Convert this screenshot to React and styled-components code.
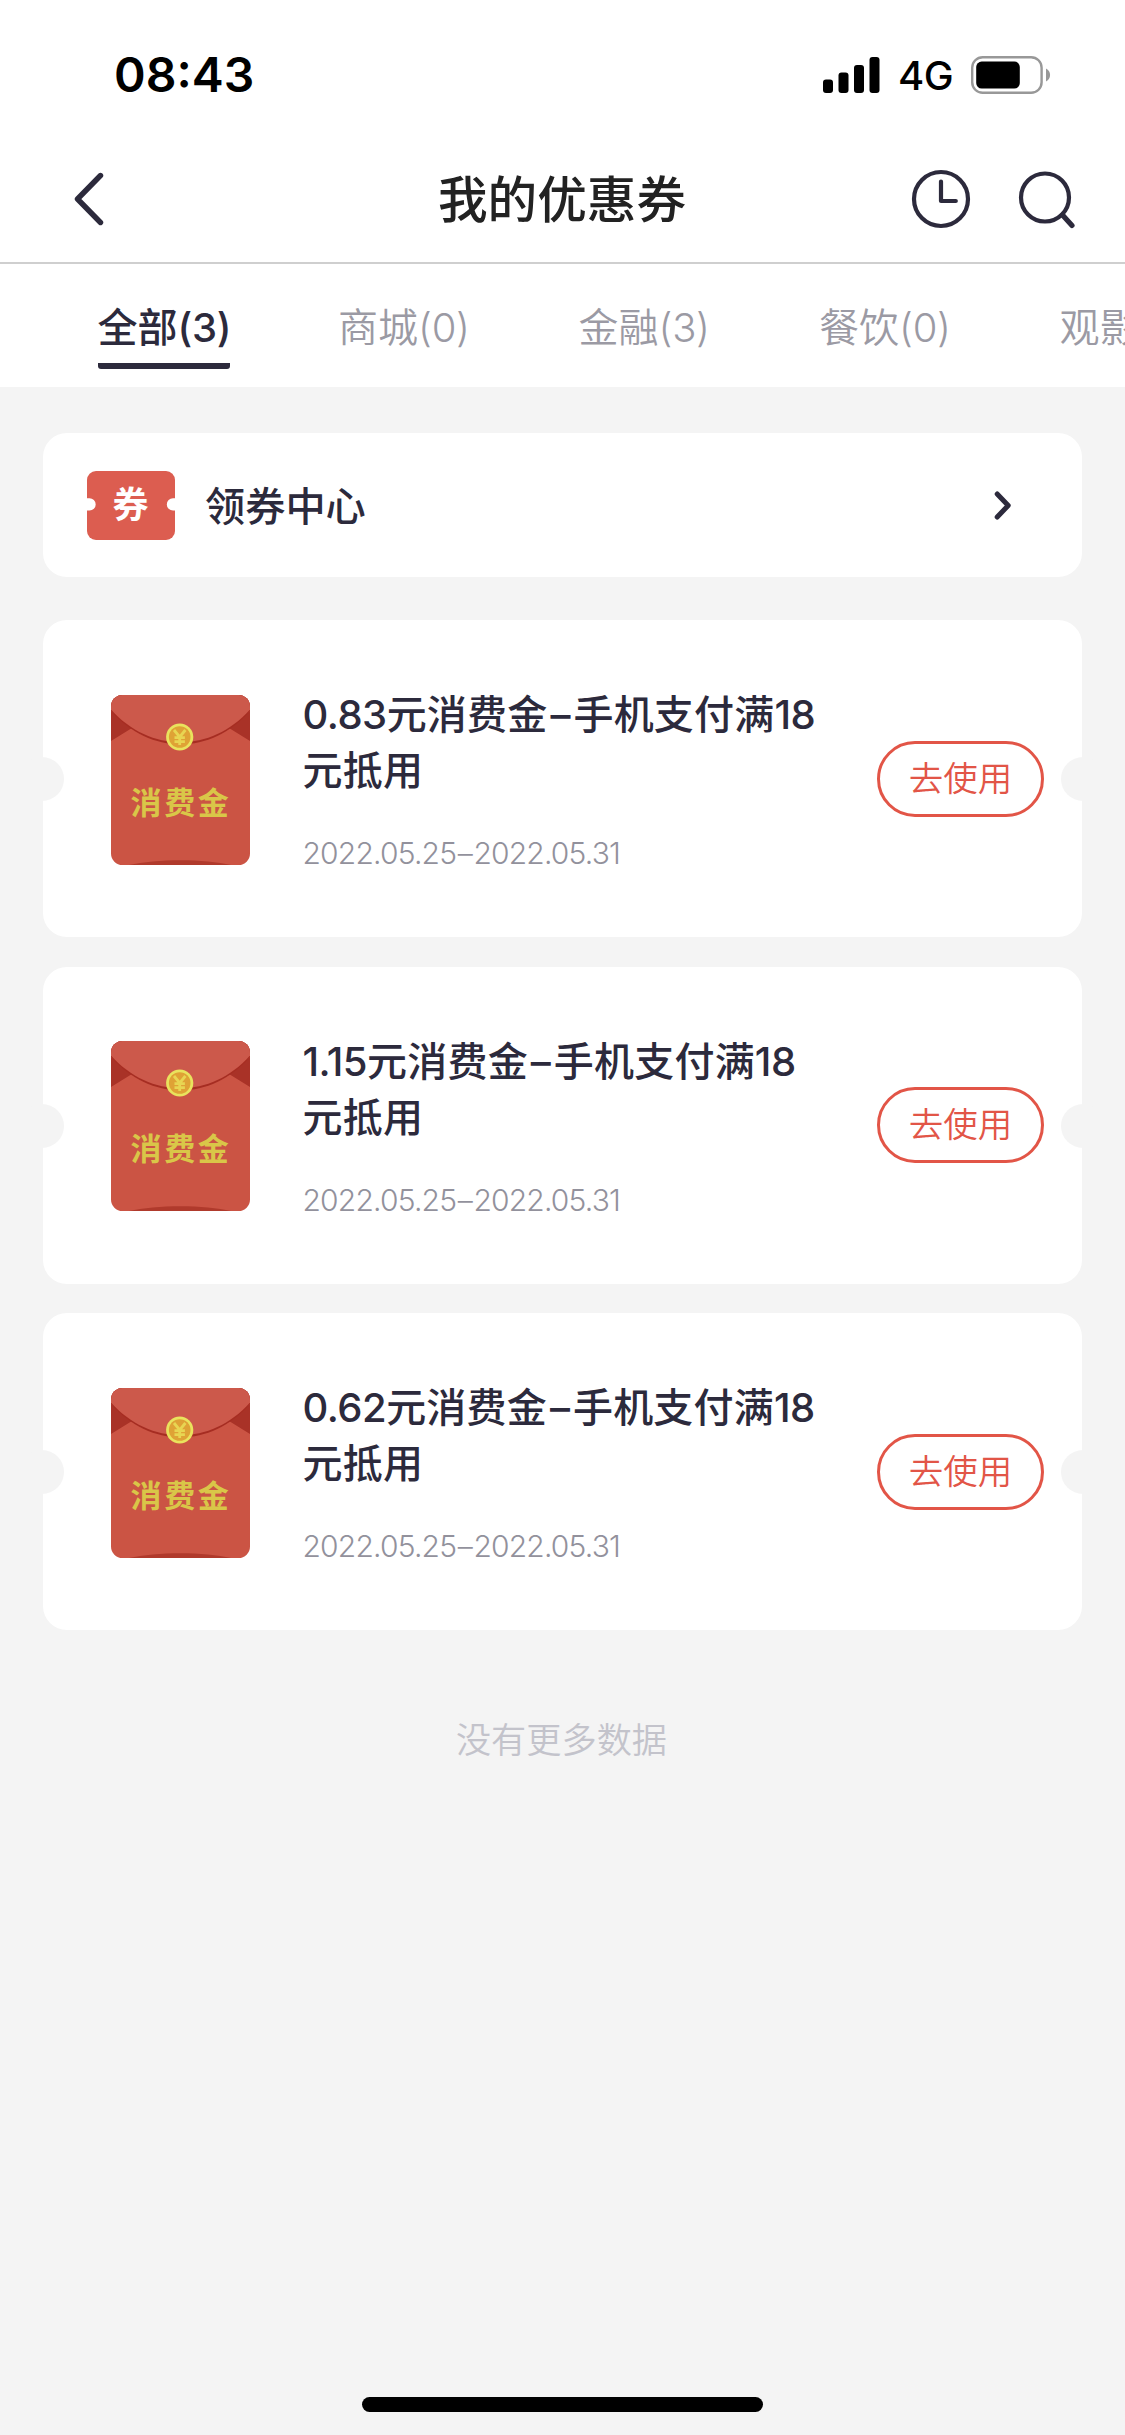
import React, { useState } from "react";
import styled, { createGlobalStyle } from "styled-components";

const tabs = [
  { id: "all", name: "全部", count: 3 },
  { id: "mall", name: "商城", count: 0 },
  { id: "finance", name: "金融", count: 3 },
  { id: "food", name: "餐饮", count: 0 },
  { id: "movie", name: "观影", count: 0 },
];

const coupons = [
  { id: 1, amount: "0.83", limit: 18, start: "2022.05.25", end: "2022.05.31" },
  { id: 2, amount: "1.15", limit: 18, start: "2022.05.25", end: "2022.05.31" },
  { id: 3, amount: "0.62", limit: 18, start: "2022.05.25", end: "2022.05.31" },
];

const SignalIcon = () => (
  <svg width="57" height="36" viewBox="0 0 57 36">
    <rect x="0" y="22.5" width="10" height="13.5" rx="3" />
    <rect x="15.5" y="15.5" width="10" height="20.5" rx="3" />
    <rect x="31" y="8" width="10" height="28" rx="3" />
    <rect x="46.5" y="0" width="10" height="36" rx="3" />
  </svg>
);

const BatteryIcon = () => (
  <svg width="80" height="38" viewBox="0 0 80 38">
    <rect
      x="1.2"
      y="1.2"
      width="69.4"
      height="35.6"
      rx="10.5"
      fill="none"
      stroke="#989898"
      strokeWidth="2.4"
    />
    <rect x="5.2" y="5.6" width="43.6" height="27" rx="5.5" />
    <path d="M75 12.5c5.4 2.6 5.4 10.4 0 13z" fill="#989898" />
  </svg>
);

const BackIcon = () => (
  <svg width="30" height="54" viewBox="0 0 30 54">
    <path
      d="M26.5 3.5L3.5 27l23 23.5"
      fill="none"
      stroke="#2c2a3c"
      strokeWidth="5.4"
      strokeLinecap="round"
      strokeLinejoin="round"
    />
  </svg>
);

const ClockIcon = () => (
  <svg width="60" height="60" viewBox="0 0 60 60">
    <g
      fill="none"
      stroke="#2c2a3c"
      strokeWidth="4.2"
      strokeLinecap="round"
      strokeLinejoin="round"
    >
      <circle cx="30" cy="30" r="27" />
      <path d="M30 12.5v19.5h14.8" />
    </g>
  </svg>
);

const SearchIcon = () => (
  <svg width="60" height="60" viewBox="0 0 60 60">
    <g fill="none" stroke="#2c2a3c" strokeLinecap="round">
      <circle cx="28" cy="28.5" r="24" strokeWidth="4.2" />
      <path d="M45.5 46l9.5 10.4" strokeWidth="5.2" />
    </g>
  </svg>
);

const ArrowIcon = () => (
  <svg width="18" height="29" viewBox="0 0 18 29">
    <path
      d="M3.2 3l11 11.5-11 11.5"
      fill="none"
      stroke="#2c2a3c"
      strokeWidth="5"
      strokeLinecap="round"
      strokeLinejoin="round"
    />
  </svg>
);

// 券 아이콘
const TicketIcon = () => (
  <svg width="88" height="69" viewBox="0 0 88 69">
    <rect width="88" height="69" rx="9" fill="#dc5d50" />
    <path
      d="M0 27.2h2.5a6.2 6.2 0 0 1 0 12.4H0zM88 27.2h-2a6.2 6.2 0 0 0 0 12.4h2z"
      fill="#fff"
    />
    <StTicketText x="43.5" y="47" textAnchor="middle">
      券
    </StTicketText>
  </svg>
);

const Envelope = () => (
  <svg width="139" height="170" viewBox="0 0 139 170">
    <defs>
      <clipPath id="envelope">
        <rect width="139" height="170" rx="11.5" />
      </clipPath>
    </defs>
    <g clipPath="url(#envelope)">
      <rect width="139" height="170" fill="#cb5444" />
      <path d="M0 16L21 33 0 46zM139 16L118 33 139 46z" fill="#a93227" />
      <path d="M0 0H139V16C100 60.5 39 60.5 0 16z" fill="#a62d22" />
      <path d="M0 0H139V14.5C100 58.2 39 58.2 0 14.5z" fill="#cc594b" />
      <path d="M18 170C45 163.5 94 163.5 120 170z" fill="#b03a2c" />
    </g>
    <circle cx="68.7" cy="42" r="13.6" fill="#e9e35d" />
    <circle cx="68.7" cy="42" r="10.8" fill="#dfa235" />
    <path
      d="M63 35l5.7 7 5.7-7M68.7 42v8M63.5 42.7h10.4M63.5 46.7h10.4"
      fill="none"
      stroke="#e8d552"
      strokeWidth="2.8"
    />
    <StEnvelopeText x="70" y="118.8" textAnchor="middle">
      消费金
    </StEnvelopeText>
  </svg>
);

const CouponItem = ({ coupon }) => {
  return (
    <StCoupon>
      <StEnvelope>
        <Envelope />
      </StEnvelope>
      <StCouponInfo>
        <StCouponTitle>
          <StNum>{coupon.amount}</StNum>元消费金<StDash>–</StDash>手机支付满
          <StNum>{coupon.limit}</StNum>元抵用
        </StCouponTitle>
        <StDate>
          {coupon.start}
          <StDateDash>–</StDateDash>
          {coupon.end}
        </StDate>
      </StCouponInfo>
      <StUseBtn type="button">去使用</StUseBtn>
    </StCoupon>
  );
};

const App = () => {
  const [activeTab, setActiveTab] = useState("all");

  return (
    <StPage>
      <GlobalStyle />
      <StStatusBar>
        <StTime>08:43</StTime>
        <StStatusRight>
          <SignalIcon />
          <StNetwork>4G</StNetwork>
          <BatteryIcon />
        </StStatusRight>
      </StStatusBar>
      <StHeader>
        <StHeaderSide>
          <StIconBtn aria-label="返回">
            <BackIcon />
          </StIconBtn>
        </StHeaderSide>
        <StTitle>我的优惠券</StTitle>
        <StHeaderSide $right>
          <StIconBtn aria-label="历史">
            <ClockIcon />
          </StIconBtn>
          <StIconBtn aria-label="搜索">
            <SearchIcon />
          </StIconBtn>
        </StHeaderSide>
      </StHeader>
      <StTabs>
        {tabs.map((tab) => (
          <StTab
            key={tab.id}
            $active={tab.id === activeTab}
            onClick={() => setActiveTab(tab.id)}
          >
            {tab.name}
            <StCount>({tab.count})</StCount>
          </StTab>
        ))}
      </StTabs>
      <StContent>
        <StCenter>
          <TicketIcon />
          <StCenterText>领券中心</StCenterText>
          <ArrowIcon />
        </StCenter>
        <StList>
          {coupons.map((coupon) => (
            <CouponItem key={coupon.id} coupon={coupon} />
          ))}
        </StList>
        <StNoMore>没有更多数据</StNoMore>
      </StContent>
      <StHomeBar />
    </StPage>
  );
};

export default App;

const GlobalStyle = createGlobalStyle`
  * {
    box-sizing: border-box;
  }
  body {
    margin: 0;
    background-color: #f4f4f4;
    font-family: Inter, "Noto Sans CJK SC", sans-serif;
  }
  svg {
    display: block;
    flex-shrink: 0;
  }
  button {
    font-family: inherit;
    padding: 0;
    border: 0;
    background-color: transparent;
    cursor: pointer;
  }
`;
const StPage = styled.div`
  width: 1125px;
  height: 2435px;
  display: flex;
  flex-direction: column;
  align-items: center;
  overflow: hidden;
  background-color: #f4f4f4;
`;
const StStatusBar = styled.div`
  width: 100%;
  height: 134px;
  padding: 15px 74px 0 114px;
  display: flex;
  align-items: center;
  justify-content: space-between;
  background-color: #fff;
`;
const StTime = styled.div`
  margin-top: 1px;
  font-size: 48px;
  font-weight: 600;
  line-height: 60px;
  color: #000;
`;
const StStatusRight = styled.div`
  display: flex;
  align-items: center;
`;
const StNetwork = styled.span`
  width: 54px;
  margin: 3px 19px 0 18px;
  font-size: 40px;
  font-weight: 500;
  line-height: 48px;
  letter-spacing: -0.5px;
  white-space: nowrap;
`;
const StHeader = styled.div`
  width: 100%;
  height: 130px;
  padding: 2px 48px 0 74px;
  display: flex;
  align-items: center;
  justify-content: space-between;
  background-color: #fff;
  border-bottom: 2px solid #cfcfcf;
`;
const StHeaderSide = styled.div`
  width: 220px;
  display: flex;
  gap: 46px;
  justify-content: ${(props) => (props.$right ? "flex-end" : "flex-start")};
`;
const StIconBtn = styled.button``;
const StTitle = styled.div`
  margin: 2px 27px 0 0;
  font-size: 49.6px;
  font-weight: 500;
  line-height: 60px;
  color: #222;
`;
const StTabs = styled.div`
  width: 100%;
  height: 123px;
  padding-left: 97.5px;
  display: flex;
  gap: 108.5px;
  background-color: #fff;
  overflow: hidden;
`;
const StTab = styled.button`
  width: 132px;
  height: 105px;
  padding-top: 26px;
  flex-shrink: 0;
  display: flex;
  font-size: 40px;
  line-height: 76px;
  white-space: nowrap;
  font-weight: ${(props) => (props.$active ? 500 : 350)};
  color: ${(props) => (props.$active ? "#2c2a3c" : "#9b9aa4")};

  /* 선택된 탭 밑줄 */
  background: ${(props) =>
    props.$active
      ? "linear-gradient(#2c2a3c, #2c2a3c) 0 100% / 100% 6px no-repeat"
      : "none"};
  border-radius: 3px;
`;
const StCount = styled.span`
  letter-spacing: -0.3px;
`;
const StContent = styled.div`
  width: 1039px;
  padding-top: 46px;
  flex: 1;
  display: flex;
  flex-direction: column;
`;
const StCenter = styled.div`
  height: 144px;
  padding: 0 70px 0 44px;
  display: flex;
  align-items: center;
  background-color: #fff;
  border-radius: 24px;
`;
const StCenterText = styled.div`
  flex: 1;
  margin: 3px 0 0 30px;
  font-size: 40.2px;
  font-weight: 500;
  line-height: 60px;
  color: #2c2a3c;
`;
const StTicketText = styled.text`
  font-size: 36px;
  font-weight: 700;
  fill: #fff;
`;
const StList = styled.div`
  margin-top: 43px;
  display: flex;
  flex-direction: column;
  gap: 29.5px;
`;
const StCoupon = styled.div`
  position: relative;
  height: 317px;
  padding: 0 38px 0 68px;
  display: flex;
  align-items: center;
  background-color: #fff;
  border-radius: 24px;

  &::before,
  &::after {
    content: "";
    position: absolute;
    top: 137px;
    width: 44px;
    height: 44px;
    border-radius: 50%;
    background-color: #f4f4f4;
  }
  &::before {
    left: -23px;
  }
  &::after {
    right: -23px;
  }
`;
const StEnvelope = styled.div`
  margin-top: 2px;
`;
const StEnvelopeText = styled.text`
  font-size: 31px;
  font-weight: 700;
  letter-spacing: 2.6px;
  fill: #d9c648;
`;
const StCouponInfo = styled.div`
  width: 524px;
  padding-top: 3px;
  margin-left: 52.5px;
`;
const StCouponTitle = styled.div`
  font-size: 40px;
  font-weight: 500;
  line-height: 56px;
  letter-spacing: 0.2px;
  color: #2c2a3c;
`;
const StNum = styled.span`
  letter-spacing: -0.5px;
`;
const StDash = styled.span`
  margin-left: 3px;
  letter-spacing: 3px;
`;
const StDate = styled.div`
  margin-top: 34px;
  font-size: 30px;
  font-weight: 350;
  line-height: 40px;
  letter-spacing: -0.8px;
  color: #92919c;
`;
const StDateDash = styled.span`
  margin: 0 1.5px;
`;
const StUseBtn = styled.button`
  width: 167px;
  height: 76px;
  margin-left: auto;
  font-size: 34.5px;
  font-weight: 350;
  line-height: 50px;
  color: #e25547;

  && {
    border: 3px solid #e25547;
    border-radius: 38px;
  }
`;
const StNoMore = styled.div`
  margin-top: 85px;
  padding-right: 2px;
  font-size: 35.2px;
  font-weight: 350;
  line-height: 50px;
  text-align: center;
  color: #c3c3cb;
`;
const StHomeBar = styled.div`
  width: 401px;
  height: 15px;
  margin-bottom: 23px;
  border-radius: 8px;
  background-color: #000;
`;
